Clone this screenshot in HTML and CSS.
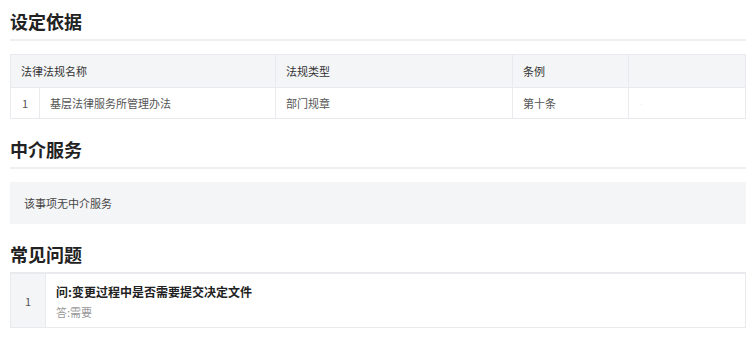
FILE: index.html
```html
<!DOCTYPE html>
<html>

<head>
    <title>办事指南</title>
    <link rel="stylesheet" href="styles.css">
</head>

<body>
    <div class="guide">
        <h2 class="section-title">设定依据</h2>
        <table class="basis-table">
            <colgroup>
                <col class="col-seq">
                <col class="col-name">
                <col class="col-type">
                <col class="col-article">
                <col>
            </colgroup>
            <thead>
                <tr>
                    <th colspan="2">法律法规名称</th>
                    <th>法规类型</th>
                    <th>条例</th>
                    <th><span class="faded">条款内容</span></th>
                </tr>
            </thead>
            <tbody>
                <tr>
                    <td class="seq">1</td>
                    <td>基层法律服务所管理办法</td>
                    <td>部门规章</td>
                    <td>第十条</td>
                    <td><span class="faded">-</span></td>
                </tr>
            </tbody>
        </table>

        <h2 class="section-title">中介服务</h2>
        <div class="notice">该事项无中介服务</div>

        <h2 class="section-title plain">常见问题</h2>
        <div class="faq">
            <div class="faq-item">
                <div class="faq-seq">1</div>
                <div class="faq-body">
                    <p class="faq-q">问:变更过程中是否需要提交决定文件</p>
                    <p class="faq-a">答:需要</p>
                </div>
            </div>
        </div>
    </div>
</body>

</html>
```

FILE: styles.css
```css
body {
    margin: 0;
    background: #fff;
    font-family: "Noto Sans CJK SC", "Noto Sans", sans-serif;
    color: #333;
}

.guide {
    padding: 0 4px 0 10px;
}

.section-title {
    margin: 0;
    padding: 17px 0 5px;
    font-size: 18px;
    line-height: 26px;
    font-weight: bold;
    color: #222;
    border-bottom: 2px solid #eeeff1;
}

.section-title:first-child {
    padding-top: 8px;
}

.section-title.plain {
    border-bottom: none;
}

.basis-table {
    width: 100%;
    margin-top: 13px;
    border-collapse: collapse;
    table-layout: fixed;
    font-size: 11px;
}

.col-seq {
    width: 29px;
}

.col-name {
    width: 236px;
}

.col-type {
    width: 237px;
}

.col-article {
    width: 116px;
}

.basis-table th,
.basis-table td {
    border: 1px solid #e8eaed;
    text-align: left;
    padding: 0 10px;
    white-space: nowrap;
    overflow: hidden;
}

.basis-table th {
    height: 32px;
    background: #f4f5f7;
    font-weight: normal;
    color: #333;
}

.basis-table td {
    height: 30px;
    color: #555;
}

.basis-table .seq {
    padding: 0;
    text-align: center;
}

.faded {
    color: #f5f5f5;
}

.notice {
    margin-top: 13px;
    height: 42px;
    line-height: 42px;
    padding-left: 14px;
    background: #f4f5f7;
    font-size: 11px;
    color: #444;
}

.faq {
    border: 1px solid #e8eaed;
    border-top: 2px solid #e8eaed;
}

.faq-item {
    display: flex;
    height: 53px;
}

.faq-seq {
    width: 34px;
    background: #f4f5f7;
    border-right: 1px solid #e8eaed;
    display: flex;
    align-items: center;
    justify-content: center;
    font-size: 11px;
    color: #555;
}

.faq-body {
    padding: 9px 10px 0;
}

.faq-q {
    margin: 0;
    font-size: 12px;
    line-height: 18px;
    font-weight: bold;
    color: #222;
}

.faq-a {
    margin: 2px 0 0;
    font-size: 11px;
    line-height: 18px;
    color: #999;
}
```
